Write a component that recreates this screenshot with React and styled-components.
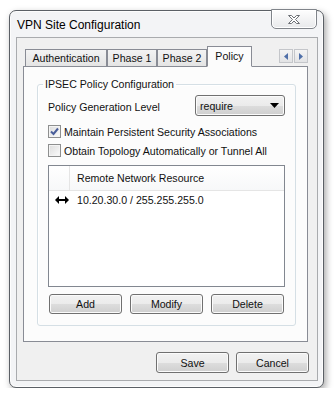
import React from 'react';
import styled, { createGlobalStyle } from 'styled-components';

const GlobalStyle = createGlobalStyle`
  body {
    margin: 0;
    background: #ffffff;
    font-family: "Liberation Sans", Arial, sans-serif;
    font-size: 10.6px;
    color: #111111;
  }
`;

const Page = styled.div`
  padding: 10px 0 0 9px;
`;

const Window = styled.div`
  width: 315px;
  height: 378px;
  box-sizing: border-box;
  border: 1px solid #5b6066;
  border-radius: 7px;
  background: #f3f4f6;
  box-shadow: inset 0 0 0 1px #fdfdfd, 2px 3px 7px rgba(0, 0, 0, 0.35);
  display: flex;
  flex-direction: column;
`;

const TitleBar = styled.div`
  height: 27px;
  display: flex;
  align-items: flex-start;
  padding: 0 6px 0 7px;
`;

const Title = styled.div`
  padding-top: 7px;
  font-size: 12px;
  line-height: 15px;
  color: #000000;
`;

const CloseButton = styled.div`
  margin-left: auto;
  margin-top: -2px;
  width: 46px;
  height: 20px;
  box-sizing: border-box;
  border: 1px solid #80848a;
  border-radius: 0 0 5px 5px;
  background: linear-gradient(#fefefe, #e8e9eb);
  box-shadow: inset 0 0 0 1px #ffffff;
  display: flex;
  align-items: center;
  justify-content: center;
`;

const Client = styled.div`
  flex: 1;
  margin: 0 5px 6px 6px;
  border: 1px solid #a9abae;
  background: #f0f0f0;
  display: flex;
  flex-direction: column;
  padding: 8px 9px 7px 6px;
`;

const TabStrip = styled.div`
  height: 21px;
  display: flex;
  align-items: flex-end;
  padding-left: 2px;
  margin-bottom: -1px;
  position: relative;
  z-index: 1;
`;

const Tab = styled.div`
  width: ${(p) => p.$width}px;
  height: ${(p) => (p.$active ? 21 : 18)}px;
  box-sizing: border-box;
  border: 1px solid #898c95;
  border-bottom: ${(p) => (p.$active ? '1px solid #fcfcfc' : '1px solid #898c95')};
  background: ${(p) => (p.$active ? '#fcfcfc' : 'linear-gradient(#f3f3f3, #e4e4e4)')};
  display: flex;
  align-items: center;
  justify-content: center;
  padding-bottom: ${(p) => (p.$active ? 2 : 0)}px;
`;

const TabScroll = styled.div`
  margin-left: auto;
  align-self: flex-start;
  margin-top: 3px;
  display: flex;
  gap: 1px;
`;

const ScrollButton = styled.div`
  width: 14px;
  height: 14px;
  box-sizing: border-box;
  border: 1px solid #c4c6ca;
  background: linear-gradient(#f4f4f4, #e2e3e5);
  display: flex;
  align-items: center;
  justify-content: center;
`;

const Panel = styled.div`
  flex: 1;
  border: 1px solid #898c95;
  background: #fcfcfc;
  padding: 11px 11px 15px 13px;
  display: flex;
  flex-direction: column;
`;

const GroupBox = styled.fieldset`
  flex: 1;
  margin: 0;
  min-width: 0;
  padding: 4px 10px 11px 10px;
  border: 1px solid #d5dfe5;
  border-radius: 3px;
  box-shadow: inset 1px 1px 0 #ffffff;
`;

const Legend = styled.legend`
  padding: 0 2px;
  margin-left: -5px;
  line-height: 13px;
`;

const GroupBody = styled.div`
  display: flex;
  flex-direction: column;
`;

const LevelRow = styled.div`
  height: 21px;
  display: flex;
  align-items: center;
  justify-content: space-between;
`;

const Label = styled.span`
  padding-top: 3px;
`;

const Select = styled.div`
  width: 90px;
  height: 21px;
  box-sizing: border-box;
  border: 1px solid #707070;
  border-radius: 3px;
  background: linear-gradient(#f2f2f2 0%, #ebebeb 50%, #dddddd 51%, #cfcfcf 100%);
  box-shadow: inset 0 0 0 1px #fbfbfb;
  display: flex;
  align-items: center;
  justify-content: space-between;
  padding: 0 5px 0 4px;
`;

const CheckRow = styled.label`
  margin-top: ${(p) => p.$gap}px;
  height: 13px;
  display: flex;
  align-items: center;
  gap: 3px;
`;

const Box = styled.span`
  width: 13px;
  height: 13px;
  box-sizing: border-box;
  border: 1px solid #8e8f8f;
  background: linear-gradient(135deg, #dcdcdc, #fbfbfb);
  box-shadow: inset 0 0 0 1px #f4f4f4;
  display: flex;
  align-items: center;
  justify-content: center;
`;

const ListView = styled.div`
  margin-top: 8px;
  height: 122px;
  box-sizing: border-box;
  border: 1px solid #828790;
  background: #ffffff;
`;

const ListHeader = styled.div`
  height: 25px;
  box-sizing: border-box;
  display: flex;
  border-bottom: 1px solid #e5e5e5;
  background: linear-gradient(#ffffff, #f7f8f9);
`;

const IconColumn = styled.div`
  width: 21px;
  box-sizing: border-box;
  border-right: ${(p) => (p.$divider ? '1px solid #e5e5e5' : 'none')};
  display: flex;
  align-items: center;
  padding-left: 6px;
`;

const Cell = styled.div`
  flex: 1;
  display: flex;
  align-items: center;
  padding-left: 7px;
`;

const ListRow = styled.div`
  height: 18px;
  display: flex;
`;

const ActionRow = styled.div`
  margin-top: 7px;
  display: flex;
  justify-content: space-between;
  padding: 0 1px;
`;

const Button = styled.div`
  width: 73px;
  height: ${(p) => p.$height || 20}px;
  box-sizing: border-box;
  border: 1px solid #707070;
  border-radius: 3px;
  background: linear-gradient(#f2f2f2 0%, #ebebeb 50%, #dddddd 51%, #cfcfcf 100%);
  box-shadow: inset 0 0 0 1px #fbfbfb;
  display: flex;
  align-items: center;
  justify-content: center;
`;

const Footer = styled.div`
  margin-top: 10px;
  margin-right: -1px;
  display: flex;
  justify-content: flex-end;
  gap: 7px;
`;

const CloseGlyph = () => (
  <svg width="14" height="11" viewBox="0 0 14 11">
    <path
      d="M1.5 1.5h3l2.5 2.5 2.5-2.5h3l-4 4 4 4h-3L7 7 4.5 9.5h-3l4-4z"
      fill="#ffffff"
      stroke="#6d7075"
      strokeWidth="1"
      strokeLinejoin="round"
    />
  </svg>
);

const ScrollArrow = ({ dir }) => (
  <svg width="4" height="7" viewBox="0 0 4 7">
    <path d={dir === 'left' ? 'M4 0v7L0 3.5z' : 'M0 0v7l4-3.5z'} fill="#4f6fa8" />
  </svg>
);

const DropArrow = () => (
  <svg width="9" height="5" viewBox="0 0 9 5">
    <path d="M0 0h9L4.5 5z" fill="#000000" />
  </svg>
);

const CheckMark = () => (
  <svg width="9" height="9" viewBox="0 0 9 9">
    <path d="M1 4.5l2.5 2.5L8 1.5" fill="none" stroke="#4a5e9a" strokeWidth="2" />
  </svg>
);

const TwoWayArrow = () => (
  <svg width="14" height="8" viewBox="0 0 14 8">
    <path d="M3 3h8v2H3z" fill="#000000" />
    <path d="M0 4l4-4v8zM14 4l-4-4v8z" fill="#000000" />
  </svg>
);

const tabs = [
  { label: 'Authentication', width: 82 },
  { label: 'Phase 1', width: 50 },
  { label: 'Phase 2', width: 50 },
  { label: 'Policy', width: 45, active: true },
];

export default function App() {
  return (
    <Page>
      <GlobalStyle />
      <Window>
        <TitleBar>
          <Title>VPN Site Configuration</Title>
          <CloseButton>
            <CloseGlyph />
          </CloseButton>
        </TitleBar>
        <Client>
          <TabStrip>
            {tabs.map((t) => (
              <Tab key={t.label} $width={t.width} $active={t.active}>
                {t.label}
              </Tab>
            ))}
            <TabScroll>
              <ScrollButton>
                <ScrollArrow dir="left" />
              </ScrollButton>
              <ScrollButton>
                <ScrollArrow dir="right" />
              </ScrollButton>
            </TabScroll>
          </TabStrip>
          <Panel>
            <GroupBox>
              <Legend>IPSEC Policy Configuration</Legend>
              <GroupBody>
                <LevelRow>
                  <Label>Policy Generation Level</Label>
                  <Select>
                    <span>require</span>
                    <DropArrow />
                  </Select>
                </LevelRow>
                <CheckRow $gap={9}>
                  <Box>
                    <CheckMark />
                  </Box>
                  Maintain Persistent Security Associations
                </CheckRow>
                <CheckRow $gap={6}>
                  <Box />
                  Obtain Topology Automatically or Tunnel All
                </CheckRow>
                <ListView>
                  <ListHeader>
                    <IconColumn $divider />
                    <Cell>Remote Network Resource</Cell>
                  </ListHeader>
                  <ListRow>
                    <IconColumn>
                      <TwoWayArrow />
                    </IconColumn>
                    <Cell>10.20.30.0 / 255.255.255.0</Cell>
                  </ListRow>
                </ListView>
                <ActionRow>
                  <Button>Add</Button>
                  <Button>Modify</Button>
                  <Button>Delete</Button>
                </ActionRow>
              </GroupBody>
            </GroupBox>
          </Panel>
          <Footer>
            <Button $height={21}>Save</Button>
            <Button $height={21}>Cancel</Button>
          </Footer>
        </Client>
      </Window>
    </Page>
  );
}
